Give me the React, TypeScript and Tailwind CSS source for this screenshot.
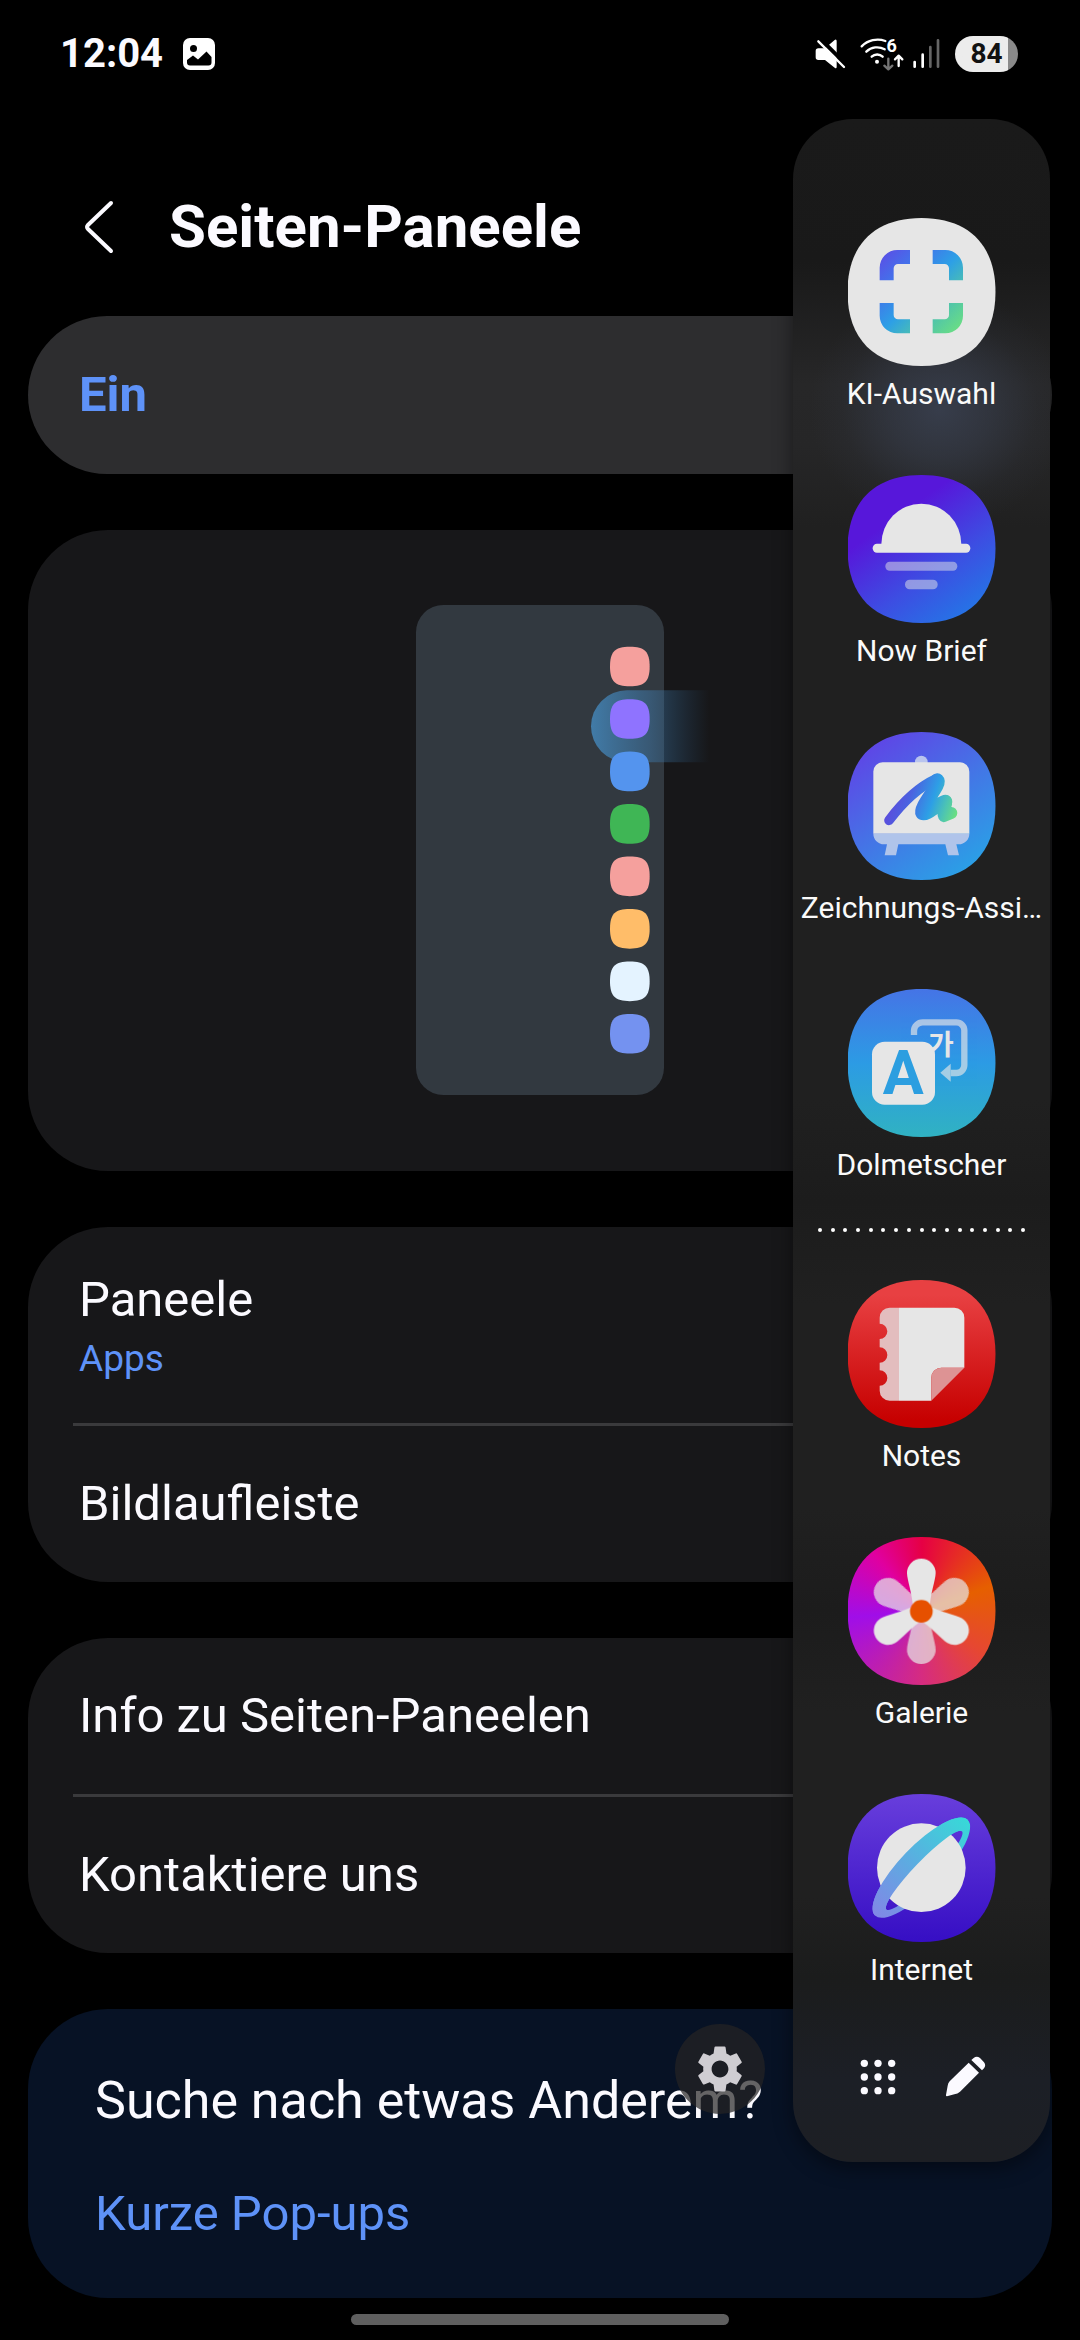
import type { FunctionComponent, ReactNode } from "react";
import { MdSettings } from "react-icons/md";

type TPanelApp = {
  label: string;
  background: string;
  glyph: ReactNode;
};

const PREVIEW_COLORS = [
  "#f5a09d",
  "#8f73ff",
  "#5494ee",
  "#3fb655",
  "#f5a09d",
  "#ffbd69",
  "#e4f3ff",
  "#7492f0",
];

const StatusBar: FunctionComponent = () => (
  <div className="flex h-[108px] items-center justify-between pr-[62px] pl-[60px]">
    <div className="flex items-center gap-5">
      <span className="text-[40px] leading-[48px] font-bold">12:04</span>
      <svg viewBox="0 0 32 32" className="size-8" aria-hidden="true">
        <rect width="32" height="32" rx="7" fill="#fff" />
        <circle cx="10.5" cy="10.5" r="3.5" fill="#000" />
        <path
          d="M4 22L10 17.5L15 21.5L23.5 13.5L28.5 19V24.5A3 3 0 0 1 25.5 27.5H7A3 3 0 0 1 4 24.5Z"
          fill="#000"
        />
      </svg>
    </div>
    <div className="flex items-center">
      <svg viewBox="106 48 276 108" className="h-9 w-[92px]" aria-hidden="true">
        <path
          d="M116 85H136L165 60Q171 56 171 64V140Q171 148 165 143L136 120H116Q108 120 108 112V93Q108 85 116 85Z"
          fill="#fff"
        />
        <path d="M119 54L202 136" stroke="#000" strokeWidth="12" />
        <path
          d="M116 64L193 141"
          stroke="#fff"
          strokeWidth="7"
          strokeLinecap="round"
        />
        <g
          fill="none"
          stroke="#fff"
          strokeWidth="7"
          strokeLinecap="round"
          strokeLinejoin="round"
        >
          <path d="M276 110A24 24 0 0 1 309 110" />
          <path d="M260 95A46 46 0 0 1 315 88" />
          <path d="M246 79A68 68 0 0 1 317 63" />
          <path d="M357 138V108M346 118L357 107L368 118" />
          <path d="M326 116V146M314 137L326 148L338 137" stroke="#757575" />
        </g>
        <circle cx="292" cy="125" r="6" fill="#fff" />
        <text
          x="336"
          y="97"
          textAnchor="middle"
          fontSize="54"
          fontWeight="700"
          fill="#fff"
        >
          6
        </text>
      </svg>
      <svg
        viewBox="402 48 84 108"
        className="ml-[6px] h-9 w-7"
        strokeWidth="8"
        strokeLinecap="round"
        aria-hidden="true"
      >
        <path d="M407 140V126M431 140V104" stroke="#fff" />
        <path d="M454 140V81M477 140V61" stroke="#666" />
      </svg>
      <span className="ml-[14px] flex h-9 w-[63px] items-center justify-center rounded-full bg-linear-to-r from-[#ececec] from-84% to-[#8a8a8a] to-84% text-[28px] leading-9 font-bold text-[#111]">
        84
      </span>
    </div>
  </div>
);

const EdgePreview: FunctionComponent = () => (
  <svg
    viewBox="0 0 744 1470"
    className="mx-auto h-[490px] w-[248px] overflow-visible"
    aria-hidden="true"
  >
    <defs>
      <linearGradient id="handle">
        <stop offset="0" stopColor="#4487ba" stopOpacity="0.85" />
        <stop offset="0.5" stopColor="#3f78a8" stopOpacity="0.5" />
        <stop offset="1" stopColor="#2c5f8c" stopOpacity="0" />
      </linearGradient>
    </defs>
    <rect width="744" height="1470" rx="82" fill="#323940" />
    <path d="M880 256H633A108 108 0 0 0 633 472H880Z" fill="url(#handle)" />
    {PREVIEW_COLORS.map((color, index) => (
      <path
        key={index}
        transform={`translate(582 ${125 + index * 157.4})`}
        d="M0 59.5C0 15 15 0 59.5 0S119 15 119 59.5 104 119 59.5 119 0 104 0 59.5Z"
        fill={color}
      />
    ))}
  </svg>
);

const SelectGlyph = (
  <>
    <linearGradient
      id="select"
      gradientUnits="userSpaceOnUse"
      x1="105"
      y1="106"
      x2="335"
      y2="336"
    >
      <stop offset="0" stopColor="#5a50e6" />
      <stop offset="0.22" stopColor="#4470ea" />
      <stop offset="0.5" stopColor="#2d9fe6" />
      <stop offset="0.75" stopColor="#4fc3ac" />
      <stop offset="1" stopColor="#6bdf82" />
    </linearGradient>
    <path
      fill="url(#select)"
      d="M95 187V149A53 53 0 0 1 148 96H186V138H150A13 13 0 0 0 137 151V187ZM345 187V149A53 53 0 0 0 292 96H254V138H290A13 13 0 0 1 303 151V187ZM95 255V293A53 53 0 0 0 148 346H186V304H150A13 13 0 0 1 137 291V255ZM345 255V293A53 53 0 0 1 292 346H254V304H290A13 13 0 0 0 303 291V255Z"
    />
  </>
);

const BriefGlyph = (
  <g fill="#e6e6e6">
    <path d="M100 208A120 122 0 0 1 340 208Z" />
    <rect x="74" y="206" width="293" height="27" rx="13" />
    <rect x="112" y="260" width="216" height="27" rx="13" opacity="0.5" />
    <rect x="171" y="314" width="98" height="29" rx="14" opacity="0.5" />
  </g>
);

const DrawingGlyph = (
  <>
    <linearGradient
      id="scribble"
      gradientUnits="userSpaceOnUse"
      x1="120"
      y1="190"
      x2="320"
      y2="260"
    >
      <stop offset="0" stopColor="#5f48dc" />
      <stop offset="0.3" stopColor="#4b62e0" />
      <stop offset="0.62" stopColor="#2d9fe6" />
      <stop offset="0.82" stopColor="#4cc3b4" />
      <stop offset="1" stopColor="#6bdf82" />
    </linearGradient>
    <circle cx="220" cy="90" r="19" fill="#b9c4ee" />
    <path
      d="M104 91H336A28 28 0 0 1 364 119V305H76V119A28 28 0 0 1 104 91Z"
      fill="#e6e6e6"
    />
    <path
      d="M76 305H364A32 32 0 0 1 332 337H325L333 370H300L292 337H151L144 370H110L117 337H108A32 32 0 0 1 76 305Z"
      fill="#b0c4ea"
    />
    <g
      fill="none"
      stroke="url(#scribble)"
      strokeLinecap="round"
      strokeLinejoin="round"
    >
      <path d="M123 265C160 216 210 166 264 141" strokeWidth="29" />
      <path
        d="M268 145C280 156 214 226 223 243C236 250 268 216 292 209"
        strokeWidth="42"
      />
      <path d="M293 208C300 214 280 238 288 252L310 243" strokeWidth="36" />
    </g>
  </>
);

const InterpreterGlyph = (
  <>
    <g opacity="0.65">
      <path
        d="M198 138V126A26 26 0 0 1 224 100H325A24 24 0 0 1 349 124V228A24 24 0 0 1 325 252H308"
        fill="none"
        stroke="#e6e6e6"
        strokeWidth="19"
      />
      <path d="M308 224V278L277 251Z" fill="#e6e6e6" />
    </g>
    <text
      x="279"
      y="197"
      textAnchor="middle"
      fontSize="84"
      fontWeight="700"
      fill="#e6e6e6"
      className="font-['Noto_Sans_CJK_KR',sans-serif]"
    >
      가
    </text>
    <rect x="72" y="158" width="189" height="189" rx="38" fill="#e6e6e6" />
    <text
      x="166"
      y="316"
      textAnchor="middle"
      fontSize="183"
      fontWeight="700"
      fill="#2c9ee0"
    >
      A
    </text>
  </>
);

const NotesGlyph = (
  <>
    <path
      d="M125 83H153V362H125A30 30 0 0 1 95 332V317A23 23 0 0 0 95 271V248A23 23 0 0 0 95 202V177A23 23 0 0 0 95 131V113A30 30 0 0 1 125 83Z"
      fill="#e3bdbe"
    />
    <path
      d="M153 83H319A30 30 0 0 1 349 113V263H280A30 30 0 0 0 250 293V362H153Z"
      fill="#e6e6e6"
    />
    <path d="M349 263H280A30 30 0 0 0 250 293V362Z" fill="#dd9394" />
  </>
);

const PETAL =
  "M177 108A43 43 0 0 1 263 108C263 130 246 170 244 223H196C194 170 177 130 177 108Z";

const GalleryGlyph = (
  <>
    <g fill="#e6e6e6" opacity="0.72">
      <path d={PETAL} transform="rotate(60 220 223)" />
      <path d={PETAL} transform="rotate(180 220 223)" />
      <path d={PETAL} transform="rotate(300 220 223)" />
    </g>
    <g fill="#e6e6e6">
      <path d={PETAL} />
      <path d={PETAL} transform="rotate(120 220 223)" />
      <path d={PETAL} transform="rotate(240 220 223)" />
    </g>
    <circle cx="220" cy="223" r="34" fill="#e65000" />
  </>
);

const InternetGlyph = (
  <>
    <linearGradient
      id="ring"
      gradientUnits="userSpaceOnUse"
      x1="-195"
      y1="0"
      x2="195"
      y2="0"
    >
      <stop offset="0" stopColor="#8088e6" />
      <stop offset="0.5" stopColor="#5aaee0" />
      <stop offset="1" stopColor="#38d8d8" />
    </linearGradient>
    <path
      transform="translate(220 221) rotate(-46)"
      d="M-200 0A200 64 0 0 1 200 0A200 64 0 0 1 -200 0ZM-163 12A163 28 0 0 0 163 12A163 28 0 0 0 -163 12Z"
      fill="url(#ring)"
    />
    <circle cx="220" cy="221" r="133" fill="#e6e6e6" />
    <path
      transform="translate(220 221) rotate(-46)"
      d="M-200 0A200 64 0 0 1 200 0L163 12A163 28 0 0 0 -163 12Z"
      fill="url(#ring)"
    />
  </>
);

const SMART_APPS: TPanelApp[] = [
  { label: "KI-Auswahl", background: "bg-[#e6e6e6]", glyph: SelectGlyph },
  {
    label: "Now Brief",
    background:
      "bg-[linear-gradient(145deg,#5717da_30%,#3d4de2_62%,#2476e6_90%)]",
    glyph: BriefGlyph,
  },
  {
    label: "Zeichnungs-Assi…",
    background: "bg-[linear-gradient(145deg,#6042e6_8%,#4474e6_50%,#28a4e6_92%)]",
    glyph: DrawingGlyph,
  },
  {
    label: "Dolmetscher",
    background: "bg-[linear-gradient(180deg,#4574e6,#2c9be4_50%,#30b2c2)]",
    glyph: InterpreterGlyph,
  },
];

const APPS: TPanelApp[] = [
  {
    label: "Notes",
    background: "bg-[linear-gradient(180deg,#e84042_10%,#c60000_95%)]",
    glyph: NotesGlyph,
  },
  {
    label: "Galerie",
    background:
      "bg-[conic-gradient(#e60044,#e65f00_70deg,#e64732_125deg,#d62c80_180deg,#a00ee8_265deg,#e000a0_320deg,#e60044)]",
    glyph: GalleryGlyph,
  },
  {
    label: "Internet",
    background: "bg-[linear-gradient(180deg,#683edc,#360ec4)]",
    glyph: InternetGlyph,
  },
];

const PanelApp: FunctionComponent<{ app: TPanelApp }> = ({ app }) => (
  <li>
    <button
      type="button"
      className="flex w-full cursor-pointer flex-col items-center gap-2"
    >
      <span
        className={`block size-[148px] [clip-path:path('M0_74C0_27_27_0_74_0S148_27_148_74_121_148_74_148_0_121_0_74Z')] ${app.background}`}
      >
        <svg viewBox="0 0 444 444" className="size-full" aria-hidden="true">
          {app.glyph}
        </svg>
      </span>
      <span className="text-[30px] leading-10 whitespace-nowrap text-[#fafafa]">
        {app.label}
      </span>
    </button>
  </li>
);

const EdgePanel: FunctionComponent = () => (
  <aside className="absolute top-[119px] right-[30px] w-[257px] rounded-[60px] bg-[radial-gradient(130px_120px_at_57%_290px,#373d4b,#373d4b99_40%,#373d4b26_75%,transparent),linear-gradient(180deg,#1a1a1a,#191919_7%,#272728_13%,#262627_16%,#202020_20%,#202020_48%,#1c1c1c_53%,#202020_58%,#202020_68%,#1c1c1c_73%,#202020_78%,#202020_87%,#1b1c1c_91%,#1c1f26_96%,#1d1f24)] pt-[99px] shadow-[0_6px_20px_rgba(0,0,0,0.45)]">
    <ul className="flex flex-col gap-[61px]">
      {SMART_APPS.map((app) => (
        <PanelApp key={app.label} app={app} />
      ))}
    </ul>
    <div className="mx-[25px] mt-[43px] mb-12 flex justify-between">
      {Array.from({ length: 17 }, (_, index) => (
        <span key={index} className="size-1 rounded-full bg-white" />
      ))}
    </div>
    <ul className="flex flex-col gap-[61px]">
      {APPS.map((app) => (
        <PanelApp key={app.label} app={app} />
      ))}
    </ul>
    <div className="mt-[43px] flex justify-center pb-[42px]">
      <button
        type="button"
        aria-label="Alle Apps"
        className="flex size-[87px] cursor-pointer items-center justify-center"
      >
        <svg viewBox="0 0 108 108" className="size-9" fill="#fbfaff">
          {[13, 54, 95].map((y) =>
            [13, 54, 95].map((x) => (
              <circle key={`${x}-${y}`} cx={x} cy={y} r="11" />
            ))
          )}
        </svg>
      </button>
      <button
        type="button"
        aria-label="Bearbeiten"
        className="flex size-[87px] cursor-pointer items-center justify-center"
      >
        <svg viewBox="912 231 123 123" className="size-[41px]" fill="#fbfaff">
          <path d="M983 251L1014 281L957 338Q950 344 940 346L918 352Q914 352 915 348L920 320Q921 312 926 307Z" />
          <path d="M991 243L998 237Q1007 229 1017 237L1029 250Q1036 259 1029 268L1023 274Z" />
        </svg>
      </button>
    </div>
    <button
      type="button"
      aria-label="Einstellungen"
      className="absolute bottom-12 -left-[118px] flex size-[90px] cursor-pointer items-center justify-center rounded-full bg-[#252424]/70"
    >
      <MdSettings className="size-14 text-[#cfcdd2]" />
    </button>
  </aside>
);

const SettingsRow: FunctionComponent<{ label: string; value?: string }> = ({
  label,
  value,
}) => (
  <button
    type="button"
    className={`flex w-full cursor-pointer flex-col justify-center px-[51px] text-left ${
      value ? "h-[196px] pt-1" : "h-[156px]"
    }`}
  >
    <span className="text-[49px] leading-[64px]">{label}</span>
    {value && (
      <span className="text-[37px] leading-[54px] text-[#5e92f8]">{value}</span>
    )}
  </button>
);

const Divider: FunctionComponent = () => (
  <hr className="mx-[45px] border-t-[3px] border-[#3a3a3c]" />
);

export default function App() {
  return (
    <div className="relative flex min-h-screen flex-col overflow-hidden bg-black font-[Roboto,sans-serif] text-[#fbfaff]">
      <StatusBar />

      <header className="flex items-center pt-[71px] pb-[41px] pl-[83px]">
        <button type="button" aria-label="Zurück" className="cursor-pointer">
          <svg viewBox="0 0 32 56" className="h-14 w-8" fill="none">
            <path
              d="M28 4L5 26Q3 28 5 30L28 52"
              stroke="#fbfaff"
              strokeWidth="4"
              strokeLinecap="round"
            />
          </svg>
        </button>
        <h1 className="ml-[54px] text-[60px] leading-[96px] font-bold">
          Seiten-Paneele
        </h1>
      </header>

      <main className="flex flex-col gap-14 px-7">
        <button
          type="button"
          className="flex h-[158px] w-full cursor-pointer items-center rounded-[80px] bg-[#2d2d2f] px-[51px] text-[49px] leading-[64px] font-bold text-[#5e92f8]"
        >
          Ein
        </button>

        <section className="rounded-[80px] bg-[#171719] pt-[75px] pb-[76px]">
          <EdgePreview />
        </section>

        <section className="rounded-[80px] bg-[#171719]">
          <SettingsRow label="Paneele" value="Apps" />
          <Divider />
          <SettingsRow label="Bildlaufleiste" />
        </section>

        <section className="rounded-[80px] bg-[#171719]">
          <SettingsRow label="Info zu Seiten-Paneelen" />
          <Divider />
          <SettingsRow label="Kontaktiere uns" />
        </section>

        <section className="rounded-[80px] bg-[#071225] px-[67px] pt-[60px] pb-[52px]">
          <h2 className="text-[52px] leading-[64px]">
            Suche nach etwas Anderem?
          </h2>
          <a
            href="#popups"
            className="mt-[49px] block text-[49px] leading-[64px] text-[#5e92f8]"
          >
            Kurze Pop-ups
          </a>
        </section>
      </main>

      <div className="mx-auto mt-4 mb-[15px] h-[11px] w-[35%] rounded-full bg-[#5f5f5f]" />

      <EdgePanel />
    </div>
  );
}
